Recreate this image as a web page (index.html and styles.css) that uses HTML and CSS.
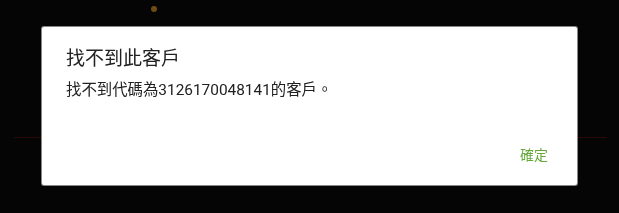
FILE: index.html
```html
<!DOCTYPE html>
<html lang="zh-Hant">
<head>
    <meta charset="UTF-8">
    <meta name="viewport" content="width=device-width, initial-scale=1.0">
    <title>找不到此客戶</title>
    <link rel="stylesheet" href="styles.css">
</head>
<body>

    <div class="screen">
        <div class="loading-dot"></div>
        <div class="divider"></div>
    </div>

    <div class="dialog" role="alertdialog">
        <div class="dialog-title">找不到此客戶</div>
        <div class="dialog-message">找不到代碼為3126170048141的客戶。</div>
        <div class="dialog-actions">
            <button class="dialog-button">確定</button>
        </div>
    </div>

</body>
</html>
```

FILE: styles.css
```css
body {
    margin: 0;
    padding: 0;
    background-color: #050505;
    font-family: Roboto, "Noto Sans CJK TC", sans-serif;
    color: #212121;
}

.screen {
    height: 213px;
    padding: 6px 12px 0 14px;
    box-sizing: border-box;
}

.loading-dot {
    width: 6px;
    height: 6px;
    margin-left: 137px;
    border-radius: 50%;
    background-color: #6e4c12;
}

.divider {
    width: 593px;
    height: 1px;
    margin-top: 125px;
    background-color: #2c0909;
}

.dialog {
    position: fixed;
    top: 27px;
    left: 42px;
    width: 535px;
    box-sizing: border-box;
    padding: 20px 0 12px 24px;
    background-color: #ffffff;
    border-radius: 2px;
    box-shadow: 0 0 0 1px rgba(190, 190, 190, 0.7);
}

.dialog-title {
    font-size: 19px;
    line-height: 24px;
}

.dialog-message {
    margin-top: 8px;
    font-size: 15.4px;
    line-height: 22px;
}

.dialog-actions {
    display: flex;
    justify-content: flex-end;
    margin-top: 36px;
    padding-right: 21px;
}

.dialog-button {
    font-family: inherit;
    font-size: 14px;
    line-height: 36px;
    padding: 0 8px;
    color: #66a83c;
    background: none;
    border: none;
    cursor: pointer;
}
```
